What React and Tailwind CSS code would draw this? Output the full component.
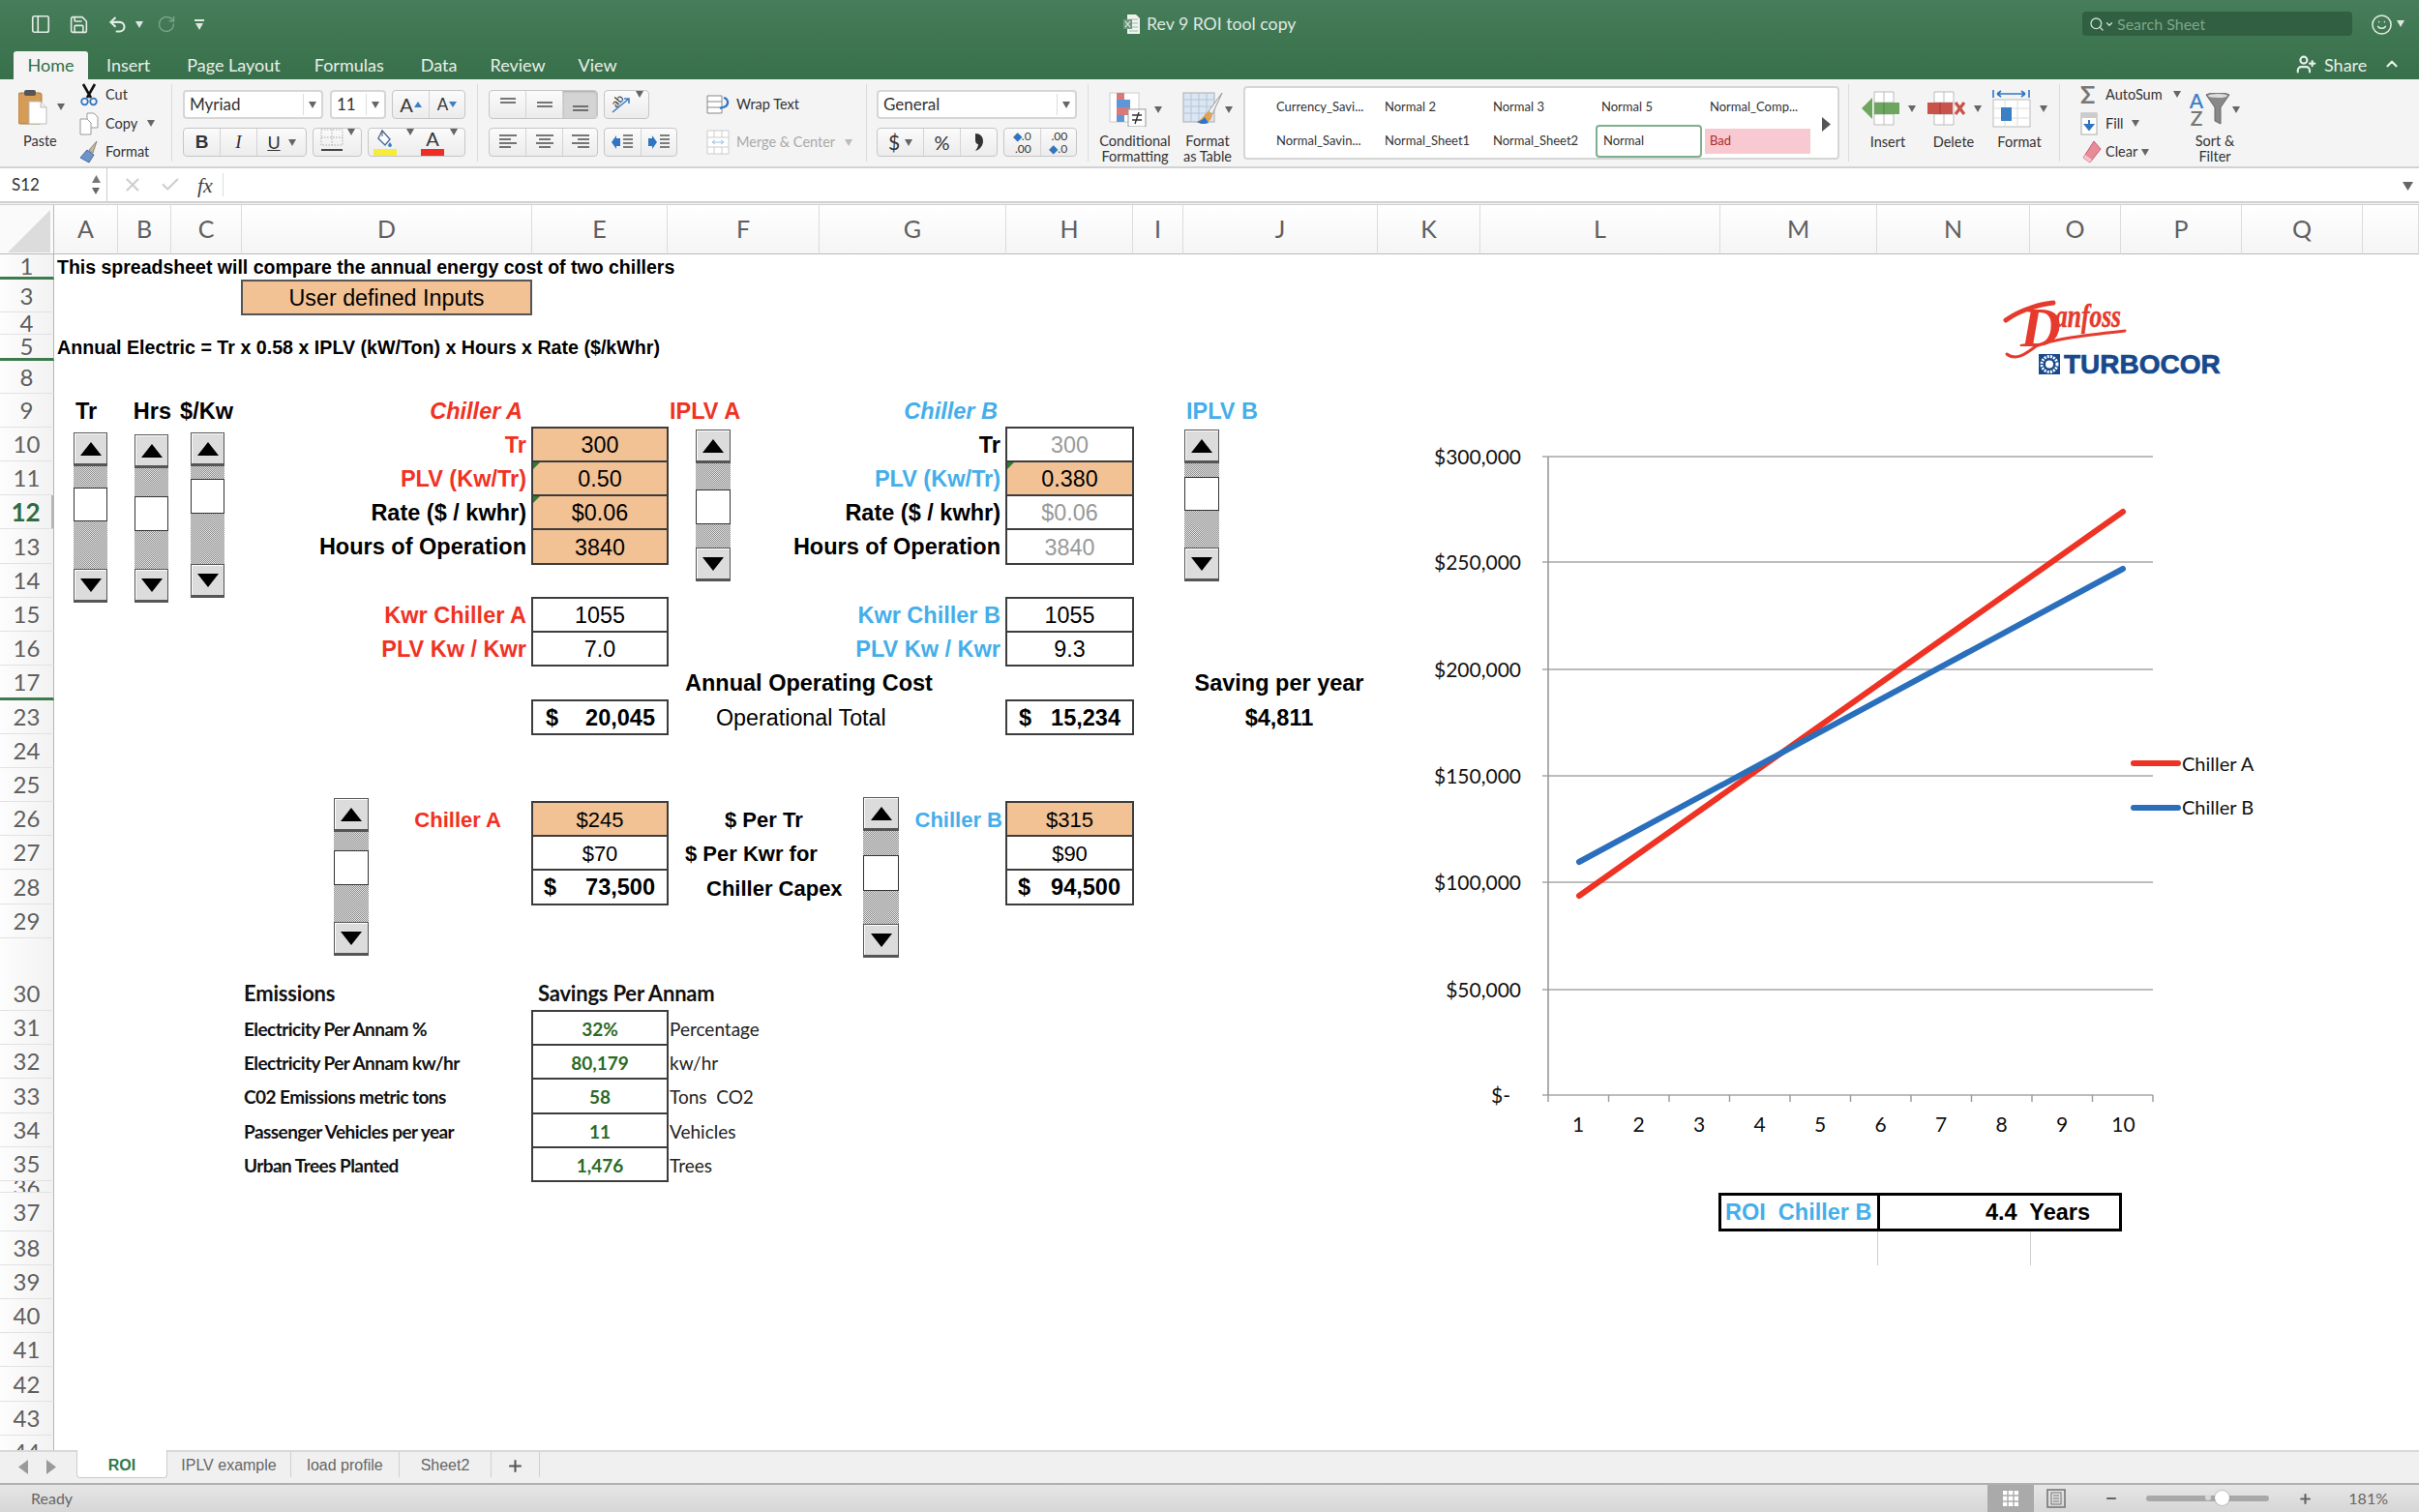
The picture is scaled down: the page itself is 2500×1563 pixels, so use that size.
import React from 'react';
import { Search, Smile, UserPlus, ChevronUp, Check, X, Undo2, RotateCw, Save, PanelLeft, ChevronDown, Plus, Minus } from 'lucide-react';

const COLS = 'ABCDEFGHIJKLMNOPQR';
const ROWS = [1,3,4,5,8,9,10,11,12,13,14,15,16,17,23,24,25,26,27,28,29,30,31,32,33,34,35,36,37,38,39,40,41,42,43,44];
const place = (at, span = 1) => {
  const c = COLS.indexOf(at[0]) + 2;
  const r = ROWS.indexOf(Number(at.slice(1))) + 2;
  return { gridColumn: `${c} / span ${span}`, gridRow: r };
};
const arial = "font-['Liberation_Sans',sans-serif]";
const lato = "font-['Lato',sans-serif]";

function C({ at, span, className = '', children }) {
  return <div style={place(at, span)} className={`relative flex items-center whitespace-nowrap min-w-0 ${className}`}>{children}</div>;
}
const big = `${arial} text-[23.3px] text-black pt-[2px]`;
const bold = `${arial} text-[23.5px] font-bold pt-[2px]`;
const bold22 = `${arial} text-[22px] font-bold pt-[2px]`;
const grey = `${arial} text-[23.3px] text-[#999] pt-[2px]`;
const small = `${arial} text-[22px] text-black pt-[2px]`;
const red = 'text-[#f03224]';
const blue = 'text-[#45aeea]';
const box = '-m-px border-2 border-[#3c3c3c] justify-center';
const orange = 'bg-[#f2c295]';
const Tick = () => <span className="absolute top-0 left-0 w-0 h-0 border-t-[7px] border-r-[7px] border-t-[#2e7d32] border-r-transparent" />;

function Caret({ className = '', color = '#666' }) {
  return <svg width="8" height="7" viewBox="0 0 8 7" className={className}><path d="M0 0h8L4 7z" fill={color} /></svg>;
}

function Spin({ className, upper, thumb }) {
  const btn = 'shrink-0 h-[35px] w-full flex items-center justify-center bg-[#dcdcdc] border border-[#555] border-b-[3px] shadow-[inset_1px_1px_0_#fff]';
  const track = 'w-full bg-[repeating-conic-gradient(#8a8a8a_0_25%,#e6e6e6_0_50%)] bg-[length:2px_2px]';
  return (
    <div className={`absolute flex flex-col ${className}`}>
      <div className={btn}><svg width="22" height="14" viewBox="0 0 22 14"><path d="M11 0l11 14H0z" fill="#000" /></svg></div>
      <div className={`${track} ${upper}`} />
      <div className={`shrink-0 w-full bg-white border border-[#333] ${thumb}`} />
      <div className={`${track} flex-1`} />
      <div className={btn}><svg width="22" height="14" viewBox="0 0 22 14"><path d="M0 0h22L11 14z" fill="#000" /></svg></div>
    </div>
  );
}

function TitleBar() {
  return (
    <div className={`relative h-[82px] shrink-0 bg-gradient-to-b from-[#477d5a] to-[#37704a] ${lato}`}>
      <div className="flex items-center h-[50px] pl-[31px] text-[#e4ece6]">
        <PanelLeft size={22} strokeWidth={1.8} />
        <Save size={21} strokeWidth={1.8} className="ml-[18px]" />
        <Undo2 size={21} strokeWidth={2.4} className="ml-[19px]" />
        <Caret color="#dfe8e1" className="ml-[8px]" />
        <RotateCw size={20} strokeWidth={1.8} className="ml-[14px] text-[#7ba388]" />
        <div className="ml-[19px] flex flex-col items-center gap-[2px]"><div className="w-[10px] h-[2px] bg-[#dfe8e1]" /><Caret color="#dfe8e1" /></div>
        <div className="ml-[950px] flex items-center">
          <svg width="18" height="22" viewBox="0 0 18 22"><path d="M4 1h9l4 4v16H4z" fill="#f0f4f1" /><path d="M6 6h9M6 10h9M6 14h9M6 18h9" stroke="#9db7a6" /><rect x="0" y="6" width="9" height="10" fill="#6f9a7d" /><path d="M2 8l5 6M7 8l-5 6" stroke="#fff" /></svg>
          <span className="ml-[6px] text-[17.7px] text-[#dfe8e1]">Rev 9 ROI tool copy</span>
        </div>
        <div className="absolute left-[2152px] top-[12px] w-[279px] h-[25px] rounded-[4px] bg-[#305f41] flex items-center pl-[7px] text-[#d0ded4]">
          <Search size={16} strokeWidth={2} />
          <ChevronDown size={10} strokeWidth={3} />
          <span className="ml-[3px] text-[16px] text-[#7fa68b]">Search Sheet</span>
        </div>
        <Smile size={23} strokeWidth={1.6} className="absolute left-[2450px] top-[14px]" />
        <Caret color="#dfe8e1" className="absolute left-[2477px] top-[21px]" />
      </div>
      <div className="absolute left-[14px] top-[53px] right-0 h-[29px] flex items-center text-[#e8efe9] text-[18px]">
        <div className="w-[77px] h-full bg-[#f4f4f4] rounded-t-[3px] flex items-center justify-center text-[#2f6f47]">Home</div>
        <span className="ml-[19px]">Insert</span>
        <span className="ml-[38px]">Page Layout</span>
        <span className="ml-[35px]">Formulas</span>
        <span className="ml-[38px]">Data</span>
        <span className="ml-[34px]">Review</span>
        <span className="ml-[34px]">View</span>
        <UserPlus size={21} strokeWidth={2.4} className="absolute left-[2359px] top-[3px]" />
        <span className="absolute left-[2388px] top-[1px] text-[18px]">Share</span>
        <ChevronUp size={18} strokeWidth={3} className="absolute left-[2449px] top-[4px]" />
      </div>
    </div>
  );
}

const Sep = () => <div className="w-px h-[80px] mt-[5px] bg-[#dcdcdc] shrink-0" />;
const seg = 'flex h-[30px] rounded-[4px] border border-[#c6c6c6] bg-gradient-to-b from-[#fbfbfb] to-[#ececec] items-stretch shrink-0';
const cell = 'flex items-center justify-center border-r border-[#d4d4d4] last:border-r-0';
const select = 'flex items-center h-[30px] rounded-[4px] border-2 border-[#d6d6d6] bg-white text-[17px] text-[#333] shrink-0';

function Lines({ rows }) {
  return (
    <svg width="20" height="18" viewBox="0 0 20 18">
      {rows.map(([x1, x2, y], i) => <path key={i} d={`M${x1} ${y}H${x2}`} stroke="#555" strokeWidth="1.6" />)}
    </svg>
  );
}

function Select({ text, className }) {
  return (
    <div className={`${select} ${className}`}>
      <span className="pl-[5px] flex-1">{text}</span>
      <div className="h-[22px] border-l border-[#ddd] w-[19px] flex items-center justify-center"><Caret /></div>
    </div>
  );
}

function Ribbon() {
  return (
    <div className={`flex h-[92px] shrink-0 bg-[#f4f4f4] border-b-2 border-[#d2d2d2] text-[14.5px] text-[#333] ${lato}`}>
      {/* clipboard */}
      <div className="flex w-[177px] shrink-0">
        <div className="w-[82px] pl-[19px] pt-[9px] flex flex-col shrink-0">
          <div className="flex items-center gap-[8px]">
            <svg width="32" height="39" viewBox="0 0 32 39"><rect x="0" y="5" width="24" height="32" rx="2" fill="#d59c55" stroke="#a9793f" /><rect x="6" y="2" width="12" height="6" rx="2" fill="#555" /><path d="M11 14h12l6 6v17H11z" fill="#fff" stroke="#bbb" /><path d="M23 14v6h6" fill="#eee" stroke="#bbb" /></svg>
            <Caret />
          </div>
          <span className="mt-[5px] pl-[5px]">Paste</span>
        </div>
        <div className="pt-px flex flex-col">
          <div className="h-[30px] flex items-center gap-[7px]">
            <svg width="20" height="24" viewBox="0 0 20 24"><path d="M4 1l8 14M16 1L8 15" stroke="#111" strokeWidth="2.6" /><circle cx="5.500" cy="19" r="3.300" fill="none" stroke="#2f75c2" strokeWidth="1.800" /><circle cx="14.500" cy="19" r="3.300" fill="none" stroke="#2f75c2" strokeWidth="1.800" /></svg>
            <span>Cut</span>
          </div>
          <div className="h-[30px] flex items-center gap-[7px]">
            <svg width="20" height="24" viewBox="0 0 20 24"><path d="M8 1h7l4 4v11H8z" fill="#fff" stroke="#999" /><path d="M1 7h7l4 4v12H1z" fill="#fff" stroke="#999" /></svg>
            <span>Copy</span><Caret className="ml-[3px]" />
          </div>
          <div className="h-[30px] flex items-center gap-[7px]">
            <svg width="20" height="24" viewBox="0 0 20 24"><path d="M18 1l-8 9 4 3z" fill="#c9b98f" stroke="#888" /><path d="M8 10l7 5-5 8-9-5z" fill="#6d93c7" stroke="#4a6c9e" /></svg>
            <span>Format</span>
          </div>
        </div>
      </div>
      <Sep />
      {/* font */}
      <div className="w-[315px] shrink-0 pl-[11px] pt-[11px] flex flex-col gap-[9px]">
        <div className="flex">
          <Select text="Myriad" className="w-[145px]" />
          <Select text="11" className="w-[58px] ml-[7px]" />
          <div className={`${seg} w-[76px] ml-[6px] text-[20px]`}>
            <div className={`${cell} w-[38px] gap-px`}>A<svg width="8" height="6" viewBox="0 0 8 6"><path d="M4 0l4 6H0z" fill="#3b7fc4" /></svg></div>
            <div className={`${cell} flex-1 gap-px text-[17px]`}>A<svg width="8" height="6" viewBox="0 0 8 6"><path d="M0 0h8L4 6z" fill="#3b7fc4" /></svg></div>
          </div>
        </div>
        <div className="flex">
          <div className={`${seg} w-[128px] text-[19px]`}>
            <div className={`${cell} w-[38px] font-black font-['Liberation_Sans']`}>B</div>
            <div className={`${cell} w-[38px] italic font-['Liberation_Serif']`}>I</div>
            <div className="flex items-center justify-center flex-1 gap-[8px]"><span className="underline text-[18px]">U</span><Caret /></div>
          </div>
          <div className={`${seg} w-[51px] ml-[6px] items-center justify-center gap-[4px]`}>
            <svg width="24" height="24" viewBox="0 0 24 24"><path d="M1 1h22v16H1zM12 1v16M1 9h22" fill="none" stroke="#aaa" strokeDasharray="1.5 1.5" /><path d="M1 22h22" stroke="#444" strokeWidth="2" /></svg>
            <Caret />
          </div>
          <div className={`${seg} w-[101px] ml-[6px] items-center`}>
            <svg width="26" height="28" viewBox="0 0 26 28" className="ml-[4px]"><path d="M10 2l8 9-5 6-7-7z" fill="#fff" stroke="#4a6c9e" strokeWidth="1.4" /><path d="M10 2v6" stroke="#555" /><path d="M18 14l2 3a2 2 0 1 1-4 0z" fill="#3b7fc4" /><rect x="1" y="21" width="24" height="7" fill="#f6ec3b" /></svg>
            <Caret className="ml-[9px]" />
            <div className="ml-[6px] w-[26px] flex flex-col items-center border-l-0 leading-none text-[20px]">A<div className="w-[24px] h-[7px] mt-[1px] bg-[#ee2d24]" /></div>
            <Caret className="ml-[5px]" />
          </div>
        </div>
      </div>
      <Sep />
      {/* alignment */}
      <div className="w-[401px] shrink-0 pl-[11px] pt-[11px] flex">
        <div className="w-[195px] flex flex-col gap-[9px] shrink-0">
          <div className="flex">
            <div className={`${seg} w-[113px]`}>
              <div className={`${cell} w-[38px]`}><Lines rows={[[2, 18, 3], [2, 18, 7]]} /></div>
              <div className={`${cell} w-[38px]`}><Lines rows={[[2, 18, 7], [2, 18, 11]]} /></div>
              <div className="flex-1 flex items-center justify-center bg-[#d4d4d4] rounded-r-[4px] shadow-[inset_0_1px_2px_#aaa]"><Lines rows={[[2, 18, 11], [2, 18, 15]]} /></div>
            </div>
            <div className={`${seg} w-[47px] ml-[6px] items-center justify-center gap-[3px]`}>
              <svg width="24" height="26" viewBox="0 0 24 26"><path d="M3 22L20 8M15 8h5v5" fill="none" stroke="#3b7fc4" strokeWidth="1.6" /><text x="3" y="15" fontSize="12" fill="#333" transform="rotate(-50 8 12)">ab</text></svg>
              <Caret />
            </div>
          </div>
          <div className="flex">
            <div className={`${seg} w-[113px]`}>
              <div className={`${cell} w-[38px]`}><Lines rows={[[1, 19, 2], [1, 13, 6], [1, 19, 10], [1, 13, 14]]} /></div>
              <div className={`${cell} w-[38px]`}><Lines rows={[[1, 19, 2], [4, 16, 6], [1, 19, 10], [4, 16, 14]]} /></div>
              <div className={`${cell} flex-1`}><Lines rows={[[1, 19, 2], [7, 19, 6], [1, 19, 10], [7, 19, 14]]} /></div>
            </div>
            <div className={`${seg} w-[76px] ml-[6px]`}>
              {[0, 1].map((k) => (
                <div key={k} className={`${cell} flex-1`}>
                  <svg width="24" height="18" viewBox="0 0 24 18"><path d={k ? 'M1 5h4V2l5 7-5 7v-3H1z' : 'M10 5H6V2L1 9l5 7v-3h4z'} fill="#2f75c2" /><path d="M13 2h10M13 6h10M13 10h10M13 14h10" stroke="#555" strokeWidth="1.6" /></svg>
                </div>
              ))}
            </div>
          </div>
        </div>
        <div className="ml-[30px] flex flex-col">
          <div className="flex items-center gap-[5px] h-[30px]">
            <svg width="26" height="24" viewBox="0 0 26 24"><path d="M1 3h15v18H1zM1 9h15M1 15h15" fill="#fff" stroke="#888" /><path d="M18 5a5 5 0 0 1 2 9l-6 2" fill="none" stroke="#2f75c2" strokeWidth="2.2" /></svg>
            <span>Wrap Text</span>
          </div>
          <div className="flex items-center gap-[5px] h-[30px] mt-[9px] text-[#a9a9a9]">
            <svg width="26" height="28" viewBox="0 0 26 28"><path d="M1 2h22v24H1zM8 2v7M16 2v7M8 19v7M16 19v7M1 9h22M1 19h22" fill="#fff" stroke="#ccc" /><path d="M6 14h12M6 14l3-2M6 14l3 2M18 14l-3-2M18 14l-3 2" stroke="#9cc0e6" /></svg>
            <span>Merge &amp; Center</span>
            <Caret color="#bbb" className="ml-[5px]" />
          </div>
        </div>
      </div>
      <Sep />
      {/* number */}
      <div className="w-[228px] shrink-0 pl-[10px] pt-[11px] flex flex-col gap-[9px]">
        <Select text="General" className="w-[207px]" />
        <div className="flex">
          <div className={`${seg} w-[125px] text-[21px]`}>
            <div className={`${cell} w-[48px] gap-[5px]`}>$<Caret /></div>
            <div className={`${cell} w-[38px] text-[20px]`}>%</div>
            <div className={`${cell} flex-1`}><svg width="10" height="20" viewBox="0 0 10 20"><path d="M1 1c5 0 8 3 8 8 0 5-4 9-8 10 2-3 3-5 3-7-2 0-3-2-3-4 0-3 0-5 0-7z" fill="#333" /></svg></div>
          </div>
          <div className={`${seg} w-[76px] ml-[6px] text-[12px] leading-[13px]`}>
            <div className={`${cell} flex-1`}><span className="flex flex-col items-end"><span className="text-[#2f75c2]">◆<span className="text-[#444]">.0</span></span><span>.00</span></span></div>
            <div className={`${cell} flex-1`}><span className="flex flex-col items-end"><span>.00</span><span className="text-[#2f75c2]">◆<span className="text-[#444]">.0</span></span></span></div>
          </div>
        </div>
      </div>
      <Sep />
      {/* styles */}
      <div className="w-[96px] shrink-0 flex flex-col items-center pt-[13px] text-center leading-[16px]">
        <div className="flex items-center gap-[5px]">
          <svg width="42" height="36" viewBox="0 0 42 36"><rect x="1" y="1" width="30" height="30" fill="#fff" stroke="#ccc" /><rect x="8" y="1" width="8" height="7" fill="#d77a7a" /><rect x="8" y="8" width="14" height="8" fill="#5e97d8" /><rect x="8" y="16" width="14" height="8" fill="#d77a7a" /><rect x="8" y="24" width="8" height="7" fill="#5e97d8" /><rect x="20" y="18" width="18" height="18" fill="#fff" stroke="#999" /><path d="M24 24h10M24 29h10M31 21l-4 12" stroke="#333" strokeWidth="1.4" /></svg>
          <Caret />
        </div>
        <span className="mt-[7px]">Conditional<br />Formatting</span>
      </div>
      <div className="w-[54px] shrink-0 flex flex-col items-center pt-[13px] text-center leading-[16px]">
        <div className="flex items-center gap-[2px]">
          <svg width="42" height="36" viewBox="0 0 42 36"><rect x="1" y="1" width="32" height="30" fill="#dbe6f3" stroke="#aaa" /><path d="M1 8h32M1 15h32M1 22h32M9 1v30M17 1v30M25 1v30" stroke="#b6c4d6" /><path d="M41 1L27 20l4 3z" fill="#f1f1f1" stroke="#999" /><path d="M27 20c-4 2-6 8-12 11 6 3 15 2 16-8z" fill="#e0a255" /><path d="M15 31c3-1 6-2 8-5l4 6c-4 2-9 1-12-1z" fill="#2f75c2" /></svg>
          <Caret />
        </div>
        <span className="mt-[7px] whitespace-nowrap">Format<br />as Table</span>
      </div>
      <div className="ml-[10px] mt-[7px] h-[76px] w-[616px] shrink-0 rounded-[4px] border-2 border-[#d6d6d6] bg-white flex items-center pl-[24px] pt-[3px] text-[13px]">
        <div className="grid grid-cols-[112px_112px_112px_112px_112px] grid-rows-[35px_35px]">
          {['Currency_Savi...', 'Normal 2', 'Normal 3', 'Normal 5', 'Normal_Comp...', 'Normal_Savin...', 'Normal_Sheet1', 'Normal_Sheet2'].map((t) => (
            <div key={t} className="flex items-center pl-[8px]">{t}</div>
          ))}
          <div className="flex items-center pl-[6px] ml-[2px] h-[34px] rounded-[4px] border-2 border-[#7fb08e] bg-white">Normal</div>
          <div className="flex items-center pl-[5px] ml-[3px] h-[26px] self-center bg-[#f8c9d0] text-[#b02a24]">Bad</div>
        </div>
        <svg width="9" height="15" viewBox="0 0 9 15" className="ml-[12px]"><path d="M0 0l9 7.5L0 15z" fill="#555" /></svg>
      </div>
      <div className="w-[9px] shrink-0" />
      <Sep />
      {/* cells */}
      <div className="w-[217px] shrink-0 flex pl-[6px]">
        {[
          { t: 'Insert', i: <svg width="44" height="36" viewBox="0 0 44 36"><path d="M14 1h20v34H14zM14 12h20M14 24h20M24 1v34" fill="#fff" stroke="#bbb" /><rect x="14" y="12" width="26" height="12" fill="#6ea65f" /><path d="M24 12v12" stroke="#4e8541" /><path d="M12 7v22L1 18z" fill="#6ea65f" /></svg> },
          { t: 'Delete', i: <svg width="44" height="36" viewBox="0 0 44 36"><path d="M8 1h20v34H8zM8 12h20M8 24h20M18 1v34" fill="#fff" stroke="#bbb" /><rect x="1" y="12" width="26" height="12" fill="#c9534b" /><path d="M14 12v12" stroke="#a53a33" /><path d="M30 12l9 12M39 12l-9 12" stroke="#c9534b" strokeWidth="3.2" /></svg> },
          { t: 'Format', i: <svg width="44" height="42" viewBox="0 0 44 42"><path d="M1 2v8M38 2v8M5 6h29M5 6l4-3M5 6l4 3M34 6l-4-3M34 6l-4 3" stroke="#2f75c2" strokeWidth="1.6" fill="none" /><rect x="1" y="12" width="38" height="28" fill="#fff" stroke="#bbb" /><path d="M1 21h38M1 31h38M13 12v28M26 12v28" stroke="#ddd" /><rect x="9" y="20" width="11" height="14" fill="#3b7fc4" /></svg> },
        ].map(({ t, i }) => (
          <div key={t} className="w-[68px] flex flex-col items-center">
            <div className="h-[50px] mt-[5px] flex items-center gap-[5px]">{i}<Caret /></div>
            <span className="-mt-px">{t}</span>
          </div>
        ))}
      </div>
      <Sep />
      {/* editing */}
      <div className="w-[130px] shrink-0 pl-[21px] pt-px flex flex-col">
        <div className="h-[30px] flex items-center gap-[8px]">
          <span className="text-[25px] leading-none font-bold text-[#777] w-[18px]">Σ</span><span>AutoSum</span><Caret className="ml-[3px]" />
        </div>
        <div className="h-[30px] flex items-center gap-[8px]">
          <svg width="18" height="24" viewBox="0 0 18 24"><rect x="1" y="1" width="16" height="22" fill="#fff" stroke="#aaa" /><rect x="1" y="1" width="16" height="5" fill="#ccc" /><path d="M9 8v8M5 13l4 5 4-5z" fill="#2f75c2" stroke="#2f75c2" strokeWidth="2" /></svg>
          <span>Fill</span><Caret />
        </div>
        <div className="h-[30px] flex items-center gap-[4px]">
          <svg width="22" height="24" viewBox="0 0 22 24"><path d="M14 1l7 8-11 14-7-5z" fill="#e98a97" stroke="#c2616f" /><path d="M3 18l7 5 2-3-7-5z" fill="#f6c4cb" /></svg>
          <span>Clear</span><Caret />
        </div>
      </div>
      <div className="w-[60px] shrink-0 flex flex-col items-center pt-[13px] text-center leading-[16px]">
        <div className="flex items-center gap-[2px] h-[36px]">
          <span className="flex flex-col leading-[18px] text-[21px] font-semibold"><span className="text-[#3b7fc4]">A</span><span className="text-[#777]">Z</span></span>
          <svg width="26" height="34" viewBox="0 0 26 34"><path d="M1 2c6-3 18-3 24 0l-9 13v17l-6-3V15z" fill="#888" stroke="#666" /><ellipse cx="13" cy="3" rx="10" ry="2" fill="#ddd" /></svg>
          <Caret />
        </div>
        <span className="mt-[7px] whitespace-nowrap">Sort &amp;<br />Filter</span>
      </div>
    </div>
  );
}

function FormulaBar() {
  return (
    <>
      <div className={`relative flex h-[34px] shrink-0 bg-white items-center ${lato}`}>
        <div className="w-[111px] h-full border-r border-[#ccc] flex items-center pl-[12px] text-[17px] text-[#333] shrink-0">
          S12
          <span className="ml-[54px] flex flex-col gap-[5px]"><svg width="9" height="8" viewBox="0 0 9 8"><path d="M4.500 0L9 8H0z" fill="#777" /></svg><Caret className="ml-[.5px]" /></span>
        </div>
        <X size={22} strokeWidth={2.4} className="ml-[15px] text-[#cfcfcf]" />
        <Check size={22} strokeWidth={2.4} className="ml-[17px] text-[#cfcfcf]" />
        <span className="ml-[17px] font-['Liberation_Serif'] italic text-[22px] text-[#444]">fx</span>
        <div className="ml-[10px] w-px h-[24px] bg-[#ddd]" />
        <svg width="11" height="9" viewBox="0 0 11 9" className="absolute right-[6px] top-[14px]"><path d="M0 0h11L5.500 9z" fill="#666" /></svg>
      </div>
      <div className="h-[4px] shrink-0 border-t-2 border-b border-[#cfcfcf] bg-[#f6f6f6]" />
    </>
  );
}

function ColHeader({ l, i }) {
  return (
    <div style={{ gridColumn: i + 2, gridRow: 1 }} className={`flex items-center justify-center bg-gradient-to-b from-[#ffffff] to-[#f5f5f5] border-r border-[#dcdcdc] border-b border-b-[#b9b9b9] text-[25px] text-[#5f5f5f] ${lato}`}>{l === 'R' ? '' : l}</div>
  );
}
function RowHeader({ n, i }) {
  const green = n === 1 || n === 5 || n === 17;
  const sel = n === 12;
  return (
    <div style={{ gridColumn: 1, gridRow: i + 2 }}
      className={`flex justify-center bg-gradient-to-r from-[#fdfdfd] to-[#f2f2f2] border-r border-r-[#b5b5b5] text-[24px] leading-none ${lato} ${n === 36 ? 'overflow-hidden' : ''} ${n === 30 ? 'items-end pb-[5px]' : 'items-center'} ${green ? 'border-b-[3px] border-b-[#3c7a50]' : 'border-b border-b-[#e2e2e2]'} ${sel ? 'font-bold text-[#2e6b41] text-[26px] border-r-[3px] border-r-[#3c7a50] from-[#e6e6e6] to-[#f2f2f2]' : 'text-[#5f5f5f]'}`}>
      {n}
    </div>
  );
}

function Sheet() {
  const em = `${lato} font-bold text-[22px] text-[#111] tracking-[-0.2px]`;
  const emr = `${lato} font-bold text-[19px] text-[#111] tracking-[-0.55px] pt-[3px]`;
  const emv = `${lato} font-bold text-[19px] text-[#2b6a26] pt-[3px]`;
  const emu = `${lato} text-[19px] text-[#222] pl-[2px] pt-[3px]`;
  return (
    <div className="flex-1 min-h-0 overflow-hidden bg-white">
      <div className="grid grid-cols-[56px_66px_55px_73px_300px_140px_157px_193px_131px_52px_201px_106px_248px_162px_158px_94px_125px_125px_58px] grid-rows-[51px_26px_34px_23px_27px_34px_35px_35px_35px_35px_36px_35px_35px_35px_36px_35px_35px_35px_35px_35px_36px_35px_75px_35px_35px_36px_35px_35px_12px_40px_35px_35px_35px_35px_36px_35px_35px]">
        <div style={{ gridColumn: 1, gridRow: 1 }} className="relative bg-[#fafafa] border-r border-b border-[#b9b9b9]">
          <svg width="44" height="44" viewBox="0 0 44 44" className="absolute left-[8px] top-[5px]"><path d="M44 0v44H0z" fill="#dcdcdc" /></svg>
        </div>
        {COLS.split('').map((l, i) => <ColHeader key={l} l={l} i={i} />)}
        {ROWS.map((n, i) => <RowHeader key={n} n={n} i={i} />)}

        <C at="A1" className={`${arial} text-[19.5px] font-bold text-black pl-[3px] pt-[2px]`}>This spreadsheet will compare the annual energy cost of two chillers</C>
        <C at="D3" className={`${big} -ml-px mb-[-3px] border-2 border-[#555] bg-[#f2c295] justify-center`}>User defined Inputs</C>
        <C at="A5" className={`${arial} text-[19.65px] font-bold text-black pl-[3px]`}>Annual Electric = Tr x 0.58 x IPLV (kW/Ton) x Hours x Rate ($/kWhr)</C>

        <C at="A9" className={`${bold} text-black justify-center`}>Tr</C>
        <C at="B9" className={`${bold} text-black justify-end`}>Hrs</C>
        <C at="C9" className={`${bold} text-black justify-center`}>$/Kw</C>
        <C at="D9" className={`${bold} italic ${red} justify-end pr-[10px]`}>Chiller A</C>
        <C at="F9" className={`${bold} ${red} pl-[2px]`}>IPLV A</C>
        <C at="G9" className={`${bold} italic ${blue} justify-end pr-[9px]`}>Chiller B</C>
        <C at="J9" className={`${bold} ${blue} pl-[3px]`}>IPLV B</C>

        <C at="D10" className={`${bold} ${red} justify-end pr-[6px]`}>Tr</C>
        <C at="D11" className={`${bold} ${red} justify-end pr-[6px]`}>PLV (Kw/Tr)</C>
        <C at="D12" className={`${bold} text-black justify-end pr-[6px]`}>Rate ($ / kwhr)</C>
        <C at="D13" className={`${bold} text-black justify-end pr-[6px]`}>Hours of Operation</C>
        <C at="E10" className={`${big} ${box} ${orange}`}>300</C>
        <C at="E11" className={`${big} ${box} ${orange}`}><Tick />0.50</C>
        <C at="E12" className={`${big} ${box} ${orange}`}><Tick />$0.06</C>
        <C at="E13" className={`${big} ${box} ${orange}`}>3840</C>

        <C at="G10" className={`${bold} text-black justify-end pr-[6px]`}>Tr</C>
        <C at="G11" className={`${bold} ${blue} justify-end pr-[6px]`}>PLV (Kw/Tr)</C>
        <C at="G12" className={`${bold} text-black justify-end pr-[6px]`}>Rate ($ / kwhr)</C>
        <C at="G13" className={`${bold} text-black justify-end pr-[6px]`}>Hours of Operation</C>
        <C at="H10" className={`${grey} ${box}`}>300</C>
        <C at="H11" className={`${big} ${box} ${orange}`}><Tick />0.380</C>
        <C at="H12" className={`${grey} ${box}`}>$0.06</C>
        <C at="H13" className={`${grey} ${box}`}>3840</C>

        <C at="D15" className={`${bold} ${red} justify-end pr-[6px]`}>Kwr Chiller A</C>
        <C at="D16" className={`${bold} ${red} justify-end pr-[6px]`}>PLV Kw / Kwr</C>
        <C at="E15" className={`${big} ${box}`}>1055</C>
        <C at="E16" className={`${big} ${box}`}>7.0</C>
        <C at="G15" className={`${bold} ${blue} justify-end pr-[6px]`}>Kwr Chiller B</C>
        <C at="G16" className={`${bold} ${blue} justify-end pr-[6px]`}>PLV Kw / Kwr</C>
        <C at="H15" className={`${big} ${box}`}>1055</C>
        <C at="H16" className={`${big} ${box}`}>9.3</C>

        <C at="F17" className={`${bold} text-black pl-[18px]`}>Annual Operating Cost</C>
        <C at="J17" className={`${bold} text-black justify-center pr-[3px]`}>Saving per year</C>
        <C at="E23" className={`${bold} text-black -m-px border-2 border-[#3c3c3c] justify-between pl-[13px] pr-[12px]`}><span>$</span><span>20,045</span></C>
        <C at="F23" className={`${big} pl-[50px]`}>Operational Total</C>
        <C at="H23" className={`${bold} text-black -m-px border-2 border-[#3c3c3c] justify-between pl-[12px] pr-[12px]`}><span>$</span><span>15,234</span></C>
        <C at="J23" className={`${bold} text-black justify-center pr-[3px]`}>$4,811</C>

        <C at="D26" className={`${bold22} ${red} justify-end pr-[32px]`}>Chiller A</C>
        <C at="E26" className={`${small} ${box} ${orange}`}>$245</C>
        <C at="E27" className={`${small} ${box}`}>$70</C>
        <C at="E28" className={`${bold} text-black -m-px border-2 border-[#3c3c3c] justify-between pl-[11px] pr-[12px]`}><span>$</span><span>73,500</span></C>
        <C at="F26" className={`${bold22} text-black pl-[59px]`}>$ Per Tr</C>
        <C at="F27" className={`${bold22} text-black pl-[18px]`}>$ Per Kwr for</C>
        <C at="F28" className={`${bold22} text-black pl-[40px]`}>Chiller Capex</C>
        <C at="G26" className={`${bold22} ${blue} justify-end pr-[4px]`}>Chiller B</C>
        <C at="H26" className={`${small} ${box} ${orange}`}>$315</C>
        <C at="H27" className={`${small} ${box}`}>$90</C>
        <C at="H28" className={`${bold} text-black -m-px border-2 border-[#3c3c3c] justify-between pl-[11px] pr-[12px]`}><span>$</span><span>94,500</span></C>

        <C at="D30" className={`${em} items-end pb-[2px] pl-[2px]`}>Emissions</C>
        <C at="E30" className={`${em} items-end pb-[2px] pl-[6px]`}>Savings Per Annam</C>
        {[
          [31, 'Electricity Per Annam %', '32%', 'Percentage'],
          [32, 'Electricity Per Annam kw/hr', '80,179', 'kw/hr'],
          [33, 'C02 Emissions metric tons', '58', 'Tons  CO2'],
          [34, 'Passenger Vehicles per year', '11', 'Vehicles'],
          [35, 'Urban Trees Planted', '1,476', 'Trees'],
        ].map(([r, a, b, c]) => (
          <React.Fragment key={r}>
            <C at={`D${r}`} className={`${emr} pl-[2px]`}>{a}</C>
            <C at={`E${r}`} className={`${emv} ${box}`}>{b}</C>
            <C at={`F${r}`} className={`${emu} whitespace-pre`}>{c}</C>
          </React.Fragment>
        ))}

        <C at="M37" className={`${bold} ${blue} -ml-[2px] border-[3px] border-black border-r-0 pl-[4px] whitespace-pre`}>ROI  Chiller B</C>
        <C at="N37" span={2} className={`${bold} text-black -mr-px border-[3px] border-black justify-end pr-[30px] whitespace-pre`}>4.4  Years</C>
        <C at="N38" className="border-l border-[#d0d0d0]" />
        <C at="O38" className="border-l border-[#d0d0d0]" />
      </div>
    </div>
  );
}

function Chart() {
  const ys = [472, 581, 692, 802, 912, 1023, 1132];
  const labels = ['$300,000', '$250,000', '$200,000', '$150,000', '$100,000', '$50,000', '$-'];
  return (
    <svg viewBox="1440 440 920 760" className="absolute left-[1440px] top-[440px] w-[920px] h-[760px]">
      <g fontFamily="Lato, sans-serif" fontSize="21" fill="#111">
        {ys.map((y, i) => <g key={y}>
          <path d={`M1594 ${y}H2225`} stroke="#a6a6a6" strokeWidth="1.6" />
          <text x={i === 6 ? 1561 : 1572} y={y + 8} textAnchor="end">{labels[i]}</text>
        </g>)}
        <path d="M1600 472V1132" stroke="#999" strokeWidth="1.6" />
        {Array.from({ length: 11 }, (_, i) => <path key={i} d={`M${1600 + 62.5 * i} 1132v7`} stroke="#999" strokeWidth="1.4" />)}
        {Array.from({ length: 10 }, (_, i) => <text key={i} x={1631 + 62.5 * i + (i === 9 ? 1 : 0)} y={1170} textAnchor="middle">{i + 1}</text>)}
        <path d="M1632 926L2194 529" stroke="#ee3324" strokeWidth="6" strokeLinecap="round" />
        <path d="M1632 891L2194 588" stroke="#2a6fbc" strokeWidth="6" strokeLinecap="round" />
        <path d="M2205 789h46" stroke="#ee3324" strokeWidth="6" strokeLinecap="round" />
        <path d="M2205 835h46" stroke="#2a6fbc" strokeWidth="6" strokeLinecap="round" />
        <text x="2255" y="797" fontSize="20">Chiller A</text>
        <text x="2255" y="842" fontSize="20">Chiller B</text>
      </g>
    </svg>
  );
}

function Logo() {
  return (
    <div className="absolute left-[2060px] top-[300px] w-[245px] h-[95px]">
      <svg viewBox="0 0 245 95" className="absolute inset-0 w-full h-full">
        <path d="M13 31C28 20 50 14 62 13" fill="none" stroke="#e53a2c" strokeWidth="5" strokeLinecap="round" />
        <path d="M14 66C24 74 36 64 44 58C62 50 100 46 136 42" fill="none" stroke="#e53a2c" strokeWidth="3" strokeLinecap="round" />
        <text x="28" y="58" fontFamily="'Liberation Serif', serif" fontStyle="italic" fontWeight="700" fontSize="58" fill="#e53a2c">D</text>
        <text x="64" y="38" fontFamily="'Liberation Serif', serif" fontStyle="italic" fontWeight="700" fontSize="34" fill="#e53a2c" stroke="#e53a2c" strokeWidth=".5" textLength="68" lengthAdjust="spacingAndGlyphs">anfoss</text>
        <rect x="47" y="66" width="22" height="21" fill="#17498c" />
        <circle cx="58" cy="76.500" r="8" fill="none" stroke="#fff" strokeWidth="3" strokeDasharray="2 1.200" />
        <circle cx="58" cy="76.500" r="4" fill="#fff" />
      </svg>
      <span className={`absolute left-[73px] top-[61px] ${arial} font-black text-[28px] leading-[32px] text-[#17498c] [-webkit-text-stroke:0.7px_#17498c]`}>TURBOCOR</span>
    </div>
  );
}

function TabBar() {
  const t = 'h-[26px] flex items-center border-r border-[#d0d0d0] pt-[2px]';
  return (
    <div className={`h-[34px] shrink-0 bg-[#f0f0f0] border-t-2 border-[#d8d8d8] flex items-start text-[16px] text-[#666] ${arial}`}>
      <div className="w-[79px] h-[30px] flex items-center pl-[19px] gap-[19px] shrink-0">
        <svg width="10" height="15" viewBox="0 0 10 15"><path d="M10 0v15L0 7.500z" fill="#9a9a9a" /></svg>
        <svg width="10" height="15" viewBox="0 0 10 15"><path d="M0 0v15l10-7.500z" fill="#9a9a9a" /></svg>
      </div>
      <div className="w-[94px] h-[29px] -mt-[2px] pt-[3px] bg-white rounded-b-[4px] border-x border-b border-[#ccc] flex items-center justify-center text-[#2f7a4a] font-bold shrink-0">ROI</div>
      <div className={`${t} w-[128px] justify-center`}>IPLV example</div>
      <div className={`${t} w-[112px] justify-center`}>load profile</div>
      <div className={`${t} w-[95px] justify-center`}>Sheet2</div>
      <div className={`${t} w-[50px] justify-center text-[#555]`}><Plus size={19} strokeWidth={2.6} /></div>
    </div>
  );
}

function StatusBar() {
  return (
    <div className={`relative h-[30px] shrink-0 bg-gradient-to-b from-[#e6e6e6] to-[#d6d6d6] border-t-2 border-[#b0b0b0] flex items-center text-[#666] ${lato}`}>
      <span className="ml-[32px] text-[16px]">Ready</span>
      <div className="ml-auto flex items-center h-full">
        <div className="w-[48px] h-full bg-[#aaaaaa] flex items-center justify-center">
          <svg width="18" height="18" viewBox="0 0 18 18"><path d="M1 1h16v16H1z" fill="#fff" /><path d="M6 1v16M12 1v16M1 6h16M1 12h16" stroke="#aaa" strokeWidth="1.4" /></svg>
        </div>
        <svg width="20" height="20" viewBox="0 0 20 20" className="ml-[13px]"><rect x="1" y="1" width="18" height="18" fill="none" stroke="#777" strokeWidth="1.6" /><rect x="5" y="4" width="10" height="12" fill="none" stroke="#777" /><path d="M7 7h6M7 10h6M7 13h6" stroke="#777" /></svg>
        <Minus size={14} strokeWidth={3.4} className="ml-[40px] text-[#666]" />
        <div className="ml-[29px] relative w-[127px] h-[6px] rounded-full bg-[#a8a8a8]">
          <div className="absolute left-[61px] -top-[1px] w-[6px] h-[6px] rounded-full bg-[#d8d8d8]" />
          <div className="absolute left-[71px] -top-[5px] w-[15px] h-[15px] rounded-full bg-white shadow-[0_0_2px_#888]" />
        </div>
        <Plus size={15} strokeWidth={3.4} className="ml-[30px] text-[#666]" />
        <span className="ml-[37px] mr-[32px] text-[16px]">181%</span>
      </div>
    </div>
  );
}

export default function App() {
  return (
    <div className="relative w-[2500px] h-[1563px] flex flex-col overflow-hidden bg-white">
      <TitleBar />
      <Ribbon />
      <FormulaBar />
      <Sheet />
      <TabBar />
      <StatusBar />

      <Spin className="left-[76px] top-[447px] w-[35px] h-[176px]" upper="h-[22px]" thumb="h-[35px]" />
      <Spin className="left-[139px] top-[449px] w-[35px] h-[174px]" upper="h-[29px]" thumb="h-[36px]" />
      <Spin className="left-[197px] top-[447px] w-[35px] h-[171px]" upper="h-[13px]" thumb="h-[36px]" />
      <Spin className="left-[719px] top-[444px] w-[36px] h-[157px]" upper="h-[27px]" thumb="h-[36px]" />
      <Spin className="left-[1224px] top-[444px] w-[36px] h-[157px]" upper="h-[14px]" thumb="h-[35px]" />
      <Spin className="left-[345px] top-[825px] w-[36px] h-[163px]" upper="h-[19px]" thumb="h-[36px]" />
      <Spin className="left-[892px] top-[824px] w-[37px] h-[166px]" upper="h-[25px]" thumb="h-[37px]" />

      <Chart />
      <Logo />
    </div>
  );
}
